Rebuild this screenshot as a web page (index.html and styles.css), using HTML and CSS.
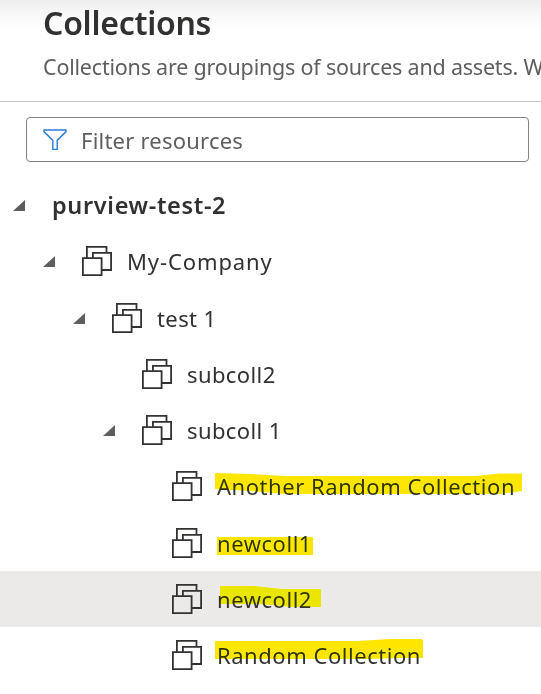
FILE: index.html
```
<!DOCTYPE html>
<html lang="en">
<head>
<meta charset="utf-8">
<title>Collections</title>
<link rel="stylesheet" href="styles.css">
</head>
<body>
<svg class="defs" aria-hidden="true">
  <symbol id="stack" viewBox="0 0 30 30">
    <path d="M4.9 12V.9H24.5V6.5M10.9 12V6.9H29.1V24H20.5M.9 12.1H19.6V29.1H.9Z" fill="none" stroke="#333231" stroke-width="1.8"/>
  </symbol>
  <symbol id="caret" viewBox="0 0 12 11"><path d="M12 0V11H0Z" fill="#605e5c"/></symbol>
</svg>
<header class="header">
  <h1 class="title">Collections</h1>
  <p class="subtitle">Collections are groupings of sources and assets. W</p>
</header>
<div class="filter">
  <svg class="funnel" viewBox="0 0 24 22"><path d="M1 1H23V2.6L14.2 11.4V20.4H9.8V11.4L1 2.6Z" fill="none" stroke="#2b7cd9" stroke-width="1.4"/></svg>
  <span class="placeholder">Filter resources</span>
</div>
<main class="tree">
  <div class="row root"><svg class="caret"><use href="#caret"/></svg><span class="label">purview-test-2</span></div>
  <div class="row d1"><svg class="caret"><use href="#caret"/></svg><svg class="icon"><use href="#stack"/></svg><span class="label l-company">My-Company</span></div>
  <div class="row d2 gap"><svg class="caret"><use href="#caret"/></svg><svg class="icon"><use href="#stack"/></svg><span class="label l-short">test 1</span></div>
  <div class="row d3"><span class="caret"></span><svg class="icon"><use href="#stack"/></svg><span class="label l-short">subcoll2</span></div>
  <div class="row d3"><svg class="caret"><use href="#caret"/></svg><svg class="icon"><use href="#stack"/></svg><span class="label l-short">subcoll 1</span></div>
  <div class="row d4"><span class="caret"></span><svg class="icon"><use href="#stack"/></svg><span class="label">Another Random Collection</span>
    <svg class="mark" viewBox="0 0 330 56"><path d="M5 15L40 16L75 18H265L290 15.5H312V33L290 36H75L40 33L5 31Z"/></svg></div>
  <div class="row d4 gap"><span class="caret"></span><svg class="icon"><use href="#stack"/></svg><span class="label">newcoll1</span>
    <svg class="mark" viewBox="0 0 330 56"><path d="M7 22H103V40H7Z"/></svg></div>
  <div class="row d4 selected"><span class="caret"></span><svg class="icon"><use href="#stack"/></svg><span class="label">newcoll2</span>
    <svg class="mark" viewBox="0 0 330 56"><path d="M10 15H44L72 18H111V36H82L50 33H10Z"/></svg></div>
  <div class="row d4"><span class="caret"></span><svg class="icon"><use href="#stack"/></svg><span class="label">Random Collection</span>
    <svg class="mark" viewBox="0 0 330 56"><path d="M5 14H148L180 12H211Q213 12 213 14V31H190L160 32H5Z"/></svg></div>
</main>
</body>
</html>
```
FILE: styles.css
```
* { box-sizing: border-box; }
body {
  margin: 0;
  height: 694px;
  overflow: hidden;
  background: linear-gradient(#ededed, #f8f8f8 14px, #fff 29px);
  color: #323130;
  font-family: "Noto Sans", sans-serif;
}
.defs { display: none; }
.header {
  height: 102px;
  padding: 1px 0 0 43px;
  border-bottom: 1px solid #c4c4c4;
  white-space: nowrap;
}
.title { margin: 0; font-size: 32px; font-weight: 600; line-height: 43px; letter-spacing: -0.27px; }
.subtitle { margin: 8px 0 0; font-size: 21.5px; line-height: 30px; letter-spacing: -0.21px; color: #605e5c; }
.filter {
  display: flex;
  align-items: center;
  width: 503px;
  height: 45px;
  margin: 15px 0 0 26px;
  padding-left: 16px;
  border: 1px solid #858381;
  border-radius: 4px;
}
.funnel { width: 24px; height: 22px; }
.placeholder { margin-left: 14px; font-size: 22px; line-height: 30px; letter-spacing: 0.22px; color: #605e5c; }
.tree { margin-top: 15px; }
.row {
  position: relative;
  display: flex;
  align-items: center;
  height: 56px;
  padding-left: 13px;
  white-space: nowrap;
}
.d1 { padding-left: 43px; }
.d2 { padding-left: 73px; }
.d3 { padding-left: 103px; }
.d4 { padding-left: 133px; }
.gap { margin-top: 1px; }
.selected { background: #ebeae8; }
.caret { flex: none; width: 12px; height: 11px; }
.icon { flex: none; width: 30px; height: 30px; margin-left: 27px; }
.label { margin-left: 15px; font-size: 22px; line-height: 30px; letter-spacing: 0.54px; }
.l-company { letter-spacing: 0.9px; }
.l-short { letter-spacing: 0.4px; }
.root .label { margin-left: 27px; font-size: 23.5px; font-weight: 600; letter-spacing: 0.65px; }
.mark {
  position: absolute;
  left: 210px;
  top: 0;
  width: 330px;
  height: 56px;
  fill: #ffe600;
  mix-blend-mode: darken;
}
```
